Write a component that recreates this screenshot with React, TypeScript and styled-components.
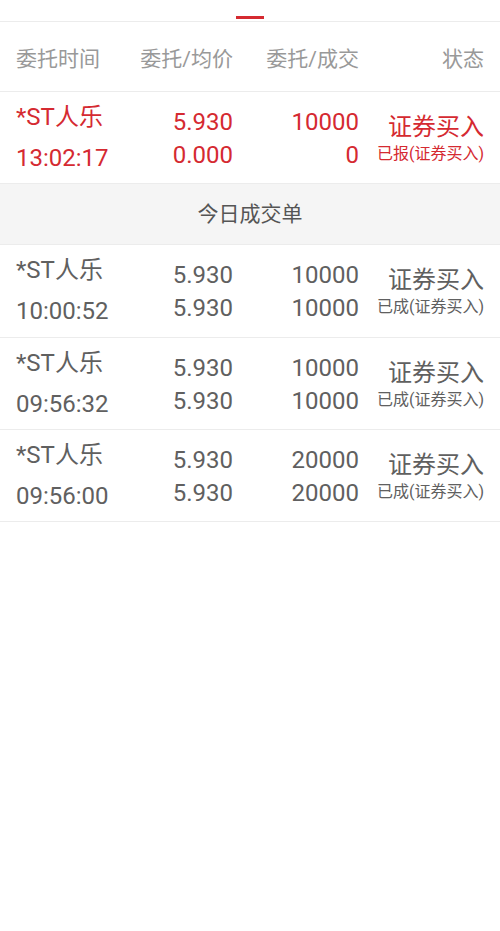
import React from "react";
import styled, { createGlobalStyle } from "styled-components";

const Global = createGlobalStyle`
  html, body { margin: 0; padding: 0; background: #fff; }
  body { font-family: Roboto, "Noto Sans CJK SC", sans-serif; }
`;

const RED = "#d52a31";
const GREY = "#606060";

const Page = styled.div`
  width: 500px;
  min-height: 931px;
  background: #fff;
`;

const TabBar = styled.div`
  height: 21px;
  display: flex;
  justify-content: center;
  align-items: flex-end;
  border-bottom: 1px solid #ececec;
`;

const Indicator = styled.div`
  width: 28px;
  height: 3px;
  background: ${RED};
  margin-bottom: 2px;
`;

const Grid = styled.div`
  display: grid;
  grid-template-columns: 92px 125px 126px 1fr;
  padding: 0 16px;
`;

const HeaderRow = styled(Grid)`
  height: 69px;
  align-items: center;
  border-bottom: 1px solid #ececec;
  color: #999;
  font-size: 21px;
`;

const HeadCell = styled.div<{ $right?: boolean }>`
  text-align: ${(p) => (p.$right ? "right" : "left")};
  white-space: nowrap;
`;

const Row = styled(Grid)<{ $red?: boolean }>`
  height: 91.3px;
  border-bottom: 1px solid #ececec;
  color: ${(p) => (p.$red ? RED : GREY)};
  box-sizing: content-box;
`;

const NameCell = styled.div`
  padding-top: 5px;
  font-size: 24px;
  line-height: 41px;
  white-space: nowrap;
`;

const NumCell = styled.div`
  padding-top: 14px;
  font-size: 24px;
  line-height: 33px;
  text-align: right;
`;

const StatusCell = styled.div`
  padding-top: 21px;
  text-align: right;
  white-space: nowrap;
`;

const StatusMain = styled.div`
  font-size: 24px;
  line-height: 28px;
`;

const StatusSub = styled.div`
  font-size: 16px;
  line-height: 26px;
`;

const Section = styled.div`
  height: 60px;
  background: #f5f5f5;
  border-bottom: 1px solid #ececec;
  display: flex;
  align-items: center;
  justify-content: center;
  font-size: 21px;
  line-height: 1;
  color: #555;
`;

type Order = {
  name: string;
  time: string;
  price: string;
  avg: string;
  qty: string;
  done: string;
  status: string;
  sub: string;
  red?: boolean;
};

const pending: Order[] = [
  { name: "*ST人乐", time: "13:02:17", price: "5.930", avg: "0.000", qty: "10000", done: "0", status: "证券买入", sub: "已报(证券买入)", red: true },
];

const filled: Order[] = [
  { name: "*ST人乐", time: "10:00:52", price: "5.930", avg: "5.930", qty: "10000", done: "10000", status: "证券买入", sub: "已成(证券买入)" },
  { name: "*ST人乐", time: "09:56:32", price: "5.930", avg: "5.930", qty: "10000", done: "10000", status: "证券买入", sub: "已成(证券买入)" },
  { name: "*ST人乐", time: "09:56:00", price: "5.930", avg: "5.930", qty: "20000", done: "20000", status: "证券买入", sub: "已成(证券买入)" },
];

const OrderRow = ({ o }: { o: Order }) => (
  <Row $red={o.red}>
    <NameCell>
      <div>{o.name}</div>
      <div>{o.time}</div>
    </NameCell>
    <NumCell>
      <div>{o.price}</div>
      <div>{o.avg}</div>
    </NumCell>
    <NumCell>
      <div>{o.qty}</div>
      <div>{o.done}</div>
    </NumCell>
    <StatusCell>
      <StatusMain>{o.status}</StatusMain>
      <StatusSub>{o.sub}</StatusSub>
    </StatusCell>
  </Row>
);

export default function App() {
  return (
    <Page>
      <Global />
      <TabBar>
        <Indicator />
      </TabBar>
      <HeaderRow>
        <HeadCell>委托时间</HeadCell>
        <HeadCell $right>委托/均价</HeadCell>
        <HeadCell $right>委托/成交</HeadCell>
        <HeadCell $right>状态</HeadCell>
      </HeaderRow>
      {pending.map((o, i) => (
        <OrderRow key={i} o={o} />
      ))}
      <Section>今日成交单</Section>
      {filled.map((o, i) => (
        <OrderRow key={i} o={o} />
      ))}
    </Page>
  );
}
